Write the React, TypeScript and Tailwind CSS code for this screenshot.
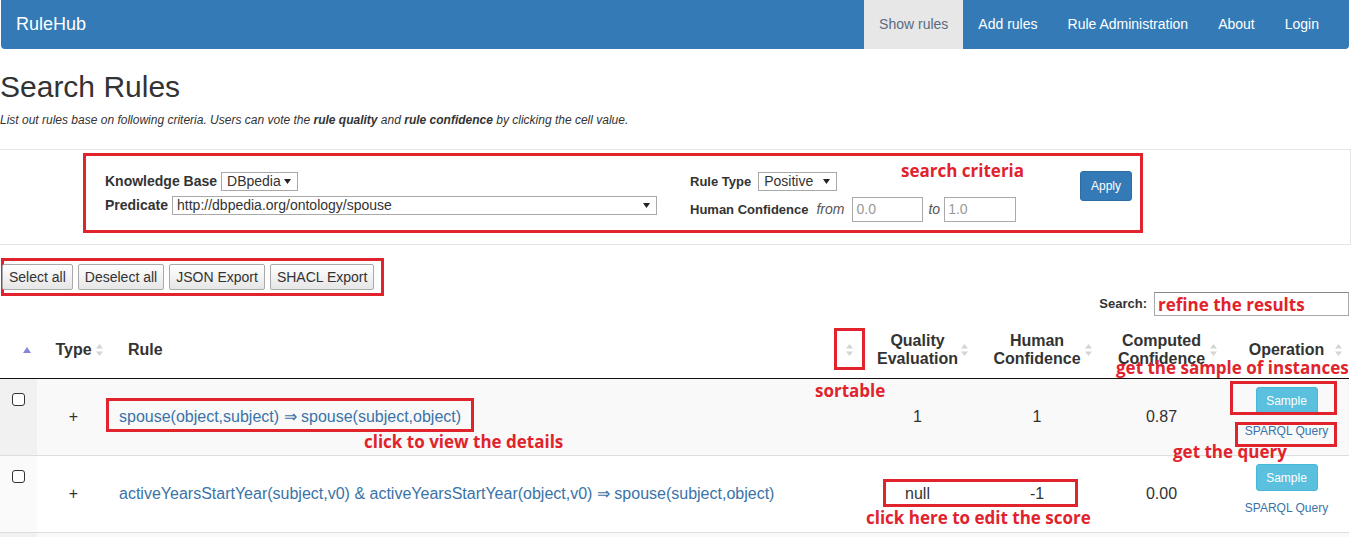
import { ReactNode } from 'react';

const navItems = ['Add rules', 'Rule Administration', 'About', 'Login'];

const cols = 'grid grid-cols-[37px_73px_750px_115px_124px_125px_125px] w-[1349px]';

const rows = [
  {
    rule: 'spouse(object,subject) \u21d2 spouse(subject,object)',
    quality: '1',
    human: '1',
    computed: '0.87',
    bg: 'bg-[#f9f9f9]',
    sortBg: 'bg-[#f1f1f1]',
  },
  {
    rule: 'activeYearsStartYear(subject,v0) & activeYearsStartYear(object,v0) \u21d2 spouse(subject,object)',
    quality: 'null',
    human: '-1',
    computed: '0.00',
    bg: 'bg-white',
    sortBg: 'bg-[#fafafa]',
  },
];

function SortBoth() {
  return (
    <svg width="7" height="12" viewBox="0 0 7 12" className="absolute right-[7px] top-1/2 -translate-y-1/2">
      <path d="M3.5 0 L7 4.5 H0 Z" fill="#d4d4d4" />
      <path d="M3.5 12 L7 7.5 H0 Z" fill="#d4d4d4" />
    </svg>
  );
}

function Caret() {
  return (
    <svg width="7" height="5" viewBox="0 0 7 5">
      <path d="M0 0 H7 L3.5 5 Z" fill="#222" />
    </svg>
  );
}

function Note({ className, children }: { className: string; children: ReactNode }) {
  return (
    <span
      className={`absolute whitespace-nowrap font-['Open_Sans',sans-serif] font-bold text-[17px] leading-[23px] text-[#e0232c] ${className}`}
    >
      {children}
    </span>
  );
}

function RedBox({ className }: { className: string }) {
  return <div className={`absolute border-[3px] border-[#e0232c] pointer-events-none ${className}`} />;
}

export default function App() {
  return (
    <div className="relative w-[1352px] h-[537px] overflow-hidden bg-white text-[#333] font-['Liberation_Sans',Arial,sans-serif]">
      <nav className="ml-[1px] w-[1348px] h-[49px] bg-[#337ab7] rounded-b-[4px] flex items-center justify-between">
        <span className="pl-[15px] text-[18px] text-white">RuleHub</span>
        <ul className="flex h-full mr-[15px] text-[14px]">
          <li className="px-[15px] flex items-center bg-[#e7e7e7] text-[#5a6b80]">Show rules</li>
          {navItems.map((n) => (
            <li key={n} className="px-[15px] flex items-center text-white">
              {n}
            </li>
          ))}
        </ul>
      </nav>

      <h2 className="mt-[21px] text-[30px] leading-[33px] font-normal">Search Rules</h2>
      <p className="mt-[9px] text-[12px] leading-[17px] italic">
        List out rules base on following criteria. Users can vote the <b>rule quality</b> and{' '}
        <b>rule confidence</b> by clicking the cell value.
      </p>

      {/* search criteria */}
      <div className="mt-[20px] w-[1351px] border-y border-r border-[#e5e5e5] pt-[3px] pb-[11px]">
        <div className="relative ml-[83px] w-[1060px] h-[80px] border-[3px] border-[#e0232c] flex items-start">
          <div className="w-[604px] pl-[19px] pt-[16px] flex flex-col gap-[5px]">
            <div className="flex items-center gap-[4px] h-[19px]">
              <span className="text-[14px] font-bold">Knowledge Base</span>
              <div className="flex items-center justify-between w-[77px] h-[19px] border border-[#a9a9a9] bg-white pl-[5px] pr-[6px] text-[14px]">
                DBpedia <Caret />
              </div>
            </div>
            <div className="flex items-center gap-[4px] h-[19px]">
              <span className="text-[14px] font-bold">Predicate</span>
              <div className="flex items-center justify-between w-[485px] h-[19px] border border-[#a9a9a9] bg-white pl-[4px] pr-[6px] text-[14px]">
                http://dbpedia.org/ontology/spouse <Caret />
              </div>
            </div>
          </div>
          <div className="w-[390px] pt-[16px] flex flex-col gap-[6px]">
            <div className="flex items-center gap-[7px] h-[19px]">
              <span className="text-[13px] font-bold">Rule Type</span>
              <div className="flex items-center justify-between w-[79px] h-[19px] border border-[#a9a9a9] bg-white pl-[5px] pr-[6px] text-[14px]">
                Positive <Caret />
              </div>
            </div>
            <div className="flex items-center h-[25px] text-[13px]">
              <span className="font-bold">Human Confidence</span>
              <i className="ml-[8px] mr-[8px] text-[14px] text-[#555]">from</i>
              <div className="w-[71px] h-[25px] border border-[#a9a9a9] flex items-center pl-[3px] text-[14px] text-[#999]">
                0.0
              </div>
              <i className="ml-[5px] mr-[4px] text-[14px] text-[#555]">to</i>
              <div className="w-[72px] h-[25px] border border-[#a9a9a9] flex items-center pl-[3px] text-[14px] text-[#999]">
                1.0
              </div>
            </div>
          </div>
          <div className="pt-[15px]">
            <button className="w-[52px] h-[30px] rounded-[3px] bg-[#337ab7] border border-[#2e6da4] text-white text-[12px]">
              Apply
            </button>
          </div>
          <Note className="left-[815px] top-[3px]">search criteria</Note>
        </div>
      </div>

      {/* buttons + search */}
      <div className="mt-[13px] w-[1349px] flex justify-between items-start">
        <div className="ml-[1px] w-[383px] h-[38px] border-[3px] border-[#e0232c] flex items-center">
          <div className="-ml-[2px] flex gap-[5px] text-[14px]">
            {['Select all', 'Deselect all', 'JSON Export', 'SHACL Export'].map((b) => (
              <button
                key={b}
                className="h-[26px] px-[6px] border border-[#aaa] rounded-[2px] bg-linear-to-b from-white to-[#e6e6e6] text-[#333] whitespace-nowrap"
              >
                {b}
              </button>
            ))}
          </div>
        </div>
        <div className="pt-[34px] flex items-center gap-[7px]">
          <span className="text-[13px] font-bold">Search:</span>
          <div className="w-[195px] h-[24px] border border-[#a9a9a9] border-t-[#888] flex items-center pl-[3px] font-['Open_Sans',sans-serif] font-bold text-[17px] leading-[23px] text-[#e0232c] whitespace-nowrap">
            refine the results
          </div>
        </div>
      </div>

      {/* table */}
      <div className="mt-[6px]">
        <div className={`${cols} h-[57px] border-b border-[#111] text-[16px] font-bold`}>
          <div className="relative">
            <svg width="8" height="6" viewBox="0 0 8 6" className="absolute right-[6px] top-1/2 -translate-y-1/2">
              <path d="M4 0 L8 6 H0 Z" fill="#8686d6" />
            </svg>
          </div>
          <div className="relative flex items-center justify-center">
            Type
            <SortBoth />
          </div>
          <div className="relative flex items-center pl-[18px]">
            Rule
            <SortBoth />
          </div>
          <div className="relative flex items-center justify-center text-center leading-[18px]">
            Quality
            <br />
            Evaluation
            <SortBoth />
          </div>
          <div className="relative flex items-center justify-center text-center leading-[18px]">
            Human
            <br />
            Confidence
            <SortBoth />
          </div>
          <div className="relative flex items-center justify-center text-center leading-[18px]">
            Computed
            <br />
            Confidence
            <SortBoth />
          </div>
          <div className="relative flex items-center justify-center">
            Operation
            <SortBoth />
          </div>
        </div>

        {rows.map((r) => (
          <div key={r.rule} className={`${cols} h-[77px] border-b border-[#ddd] text-[16px] ${r.bg}`}>
            <div className={`pl-[12px] pt-[14px] ${r.sortBg}`}>
              <div className="w-[13px] h-[13px] border border-[#333] rounded-[3px] bg-white" />
            </div>
            <div className="flex items-center justify-center">+</div>
            <div className="flex items-center pl-[9px]">
              <a className="text-[#3a73a8] whitespace-nowrap">{r.rule}</a>
            </div>
            <div className="flex items-center justify-center">{r.quality}</div>
            <div className="flex items-center justify-center">{r.human}</div>
            <div className="flex items-center justify-center">{r.computed}</div>
            <div className="flex flex-col items-center pt-[8px]">
              <button className="w-[62px] h-[27px] rounded-[3px] bg-[#5bc0de] border border-[#46b8da] text-white text-[12px]">
                Sample
              </button>
              <a className="mt-[9px] text-[12px] leading-[17px] text-[#3a73a8]">SPARQL Query</a>
            </div>
          </div>
        ))}
        <div className={`${cols} h-[77px] bg-[#f9f9f9]`}>
          <div className="bg-[#f1f1f1]" />
        </div>
      </div>

      {/* annotations over the table */}
      <RedBox className="left-[834px] top-[328px] w-[31px] h-[42px]" />
      <RedBox className="left-[106px] top-[398px] w-[368px] h-[34px]" />
      <RedBox className="left-[1230px] top-[381px] w-[107px] h-[34px]" />
      <RedBox className="left-[1235px] top-[422px] w-[102px] h-[25px]" />
      <RedBox className="left-[883px] top-[479px] w-[195px] h-[28px]" />
      <Note className="left-[1116px] top-[356px]">get the sample of instances</Note>
      <Note className="left-[815px] top-[379px]">sortable</Note>
      <Note className="left-[364px] top-[430px]">click to view the details</Note>
      <Note className="left-[1173px] top-[440px]">get the query</Note>
      <Note className="left-[866px] top-[506px]">click here to edit the score</Note>
    </div>
  );
}
